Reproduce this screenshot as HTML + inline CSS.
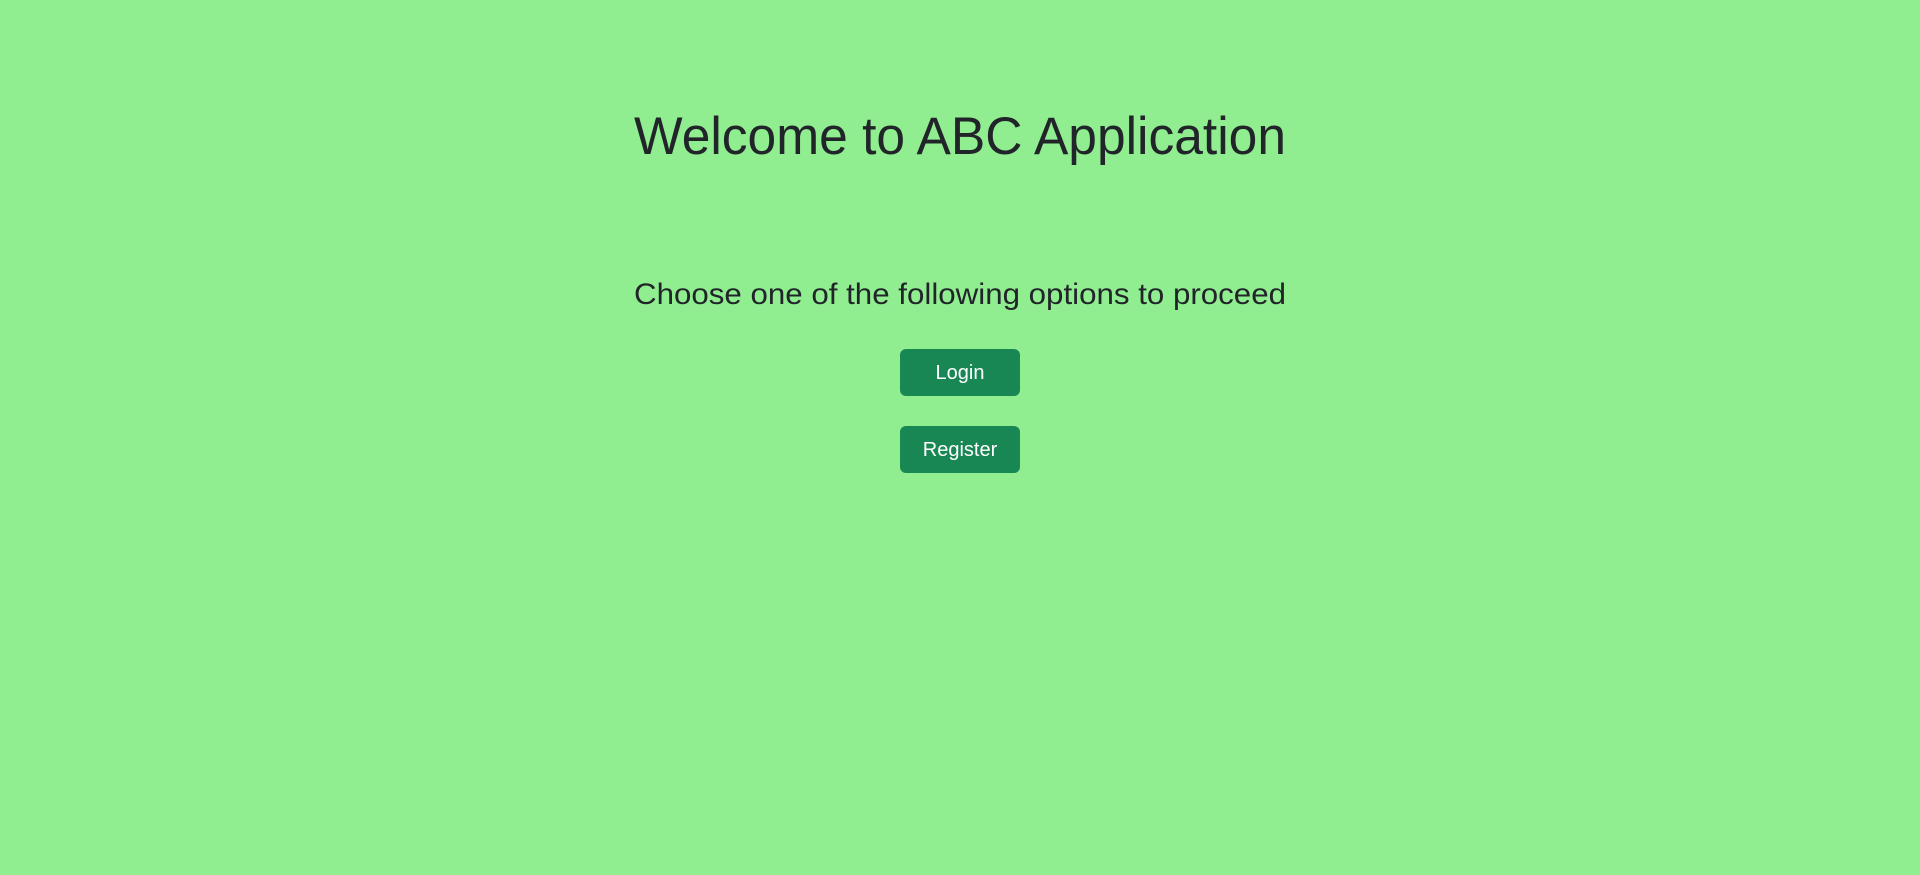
<!DOCTYPE html>
<html><head><meta charset="utf-8"><style>
html,body{margin:0;padding:0;width:1920px;height:875px;background:#90EE90;overflow:hidden;font-family:"Liberation Sans",sans-serif;color:#212529}
.t{position:absolute;left:960px;white-space:nowrap;line-height:1;transform-origin:0 0}
#h1{top:110px;font-size:53px}
#h3{top:280px;font-size:30px}
.btn{position:absolute;left:900px;width:120px;height:47px;background:#198754;border-radius:6px;color:#fff;font-size:20px;line-height:49px;text-align:center;overflow:hidden}
</style></head><body>
<div class="t" id="h1">Welcome to ABC Application</div>
<div class="t" id="h3">Choose one of the following options to proceed</div>
<div class="btn" style="top:349px">Login</div>
<div class="btn" style="top:426px">Register</div>
<script>
function fit(id,w){var e=document.getElementById(id);var r=e.getBoundingClientRect().width;var s=w/r;e.style.left=(960-w/2)+'px';e.style.transform='scaleX('+s+')';}
fit('h1',652);fit('h3',652);
</script>
</body></html>
